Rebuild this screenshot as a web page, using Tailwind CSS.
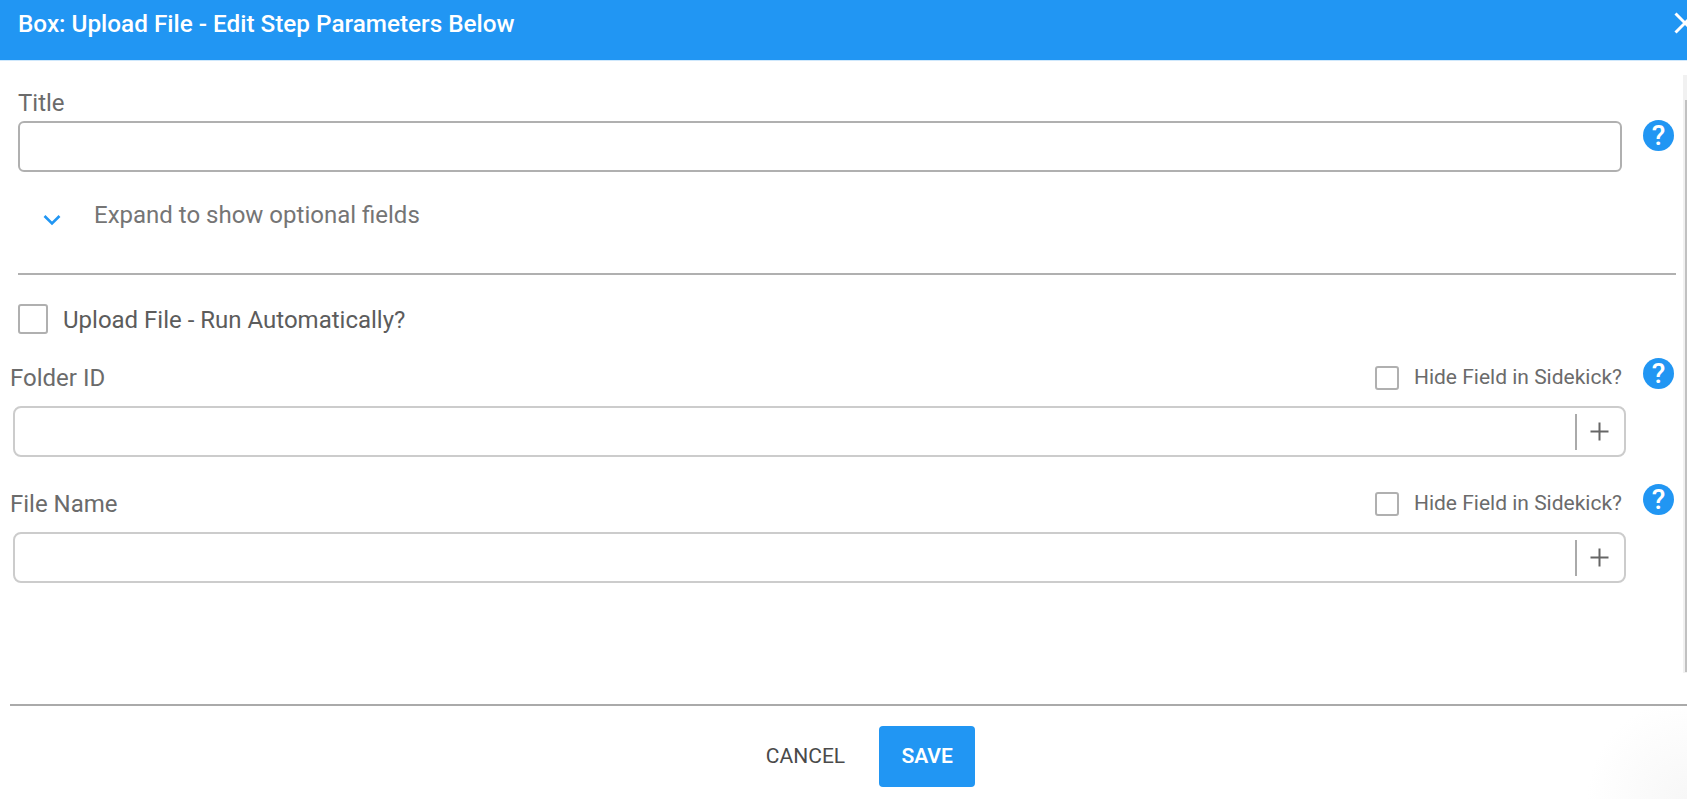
<!doctype html>
<html>
<head>
<meta charset="utf-8">
<script src="https://cdn.jsdelivr.net/npm/@tailwindcss/browser@4"></script>
</head>
<body class="bg-white overflow-hidden">
<div class="relative flex flex-col w-[1687px] h-[799px] overflow-hidden font-['Roboto',sans-serif] bg-white">
  <header class="h-[61px] shrink-0 bg-[#2196f3] border-b border-[#cfe8fc] flex justify-between pl-[18px] relative">
    <h1 class="text-[24.3px] leading-[48px] font-medium text-white whitespace-nowrap">Box: Upload File - Edit Step Parameters Below</h1>
    <svg class="absolute left-[1674px] top-[12px] w-[22px] h-[22px]" viewBox="0 0 22 22" fill="none" stroke="#fff" stroke-width="3"><path d="M1.5 1.5 L20.5 20.5 M20.5 1.5 L1.5 20.5"/></svg>
  </header>

  <main class="h-[643px] shrink-0 relative">
    <div class="pl-[18px] pt-[29px] w-[1676px]">
      <label class="block text-[24px] leading-[26px] text-[#6b6b6b]">Title</label>
      <div class="flex mt-[5px]">
        <input class="w-[1604px] h-[51px] border-2 border-[#b0b0b0] rounded-[6px] bg-white" type="text">
        <svg class="w-[31px] h-[31px] ml-[21px] -mt-[1px]" viewBox="0 0 30 30"><circle cx="15" cy="15" r="15" fill="#2196f3"/><text x="15" y="24.5" text-anchor="middle" font-size="27" font-weight="500" fill="#fff" font-family="Roboto">?</text></svg>
      </div>
      <button class="flex items-center mt-[28px] h-[30px] text-[24px] text-[#757575] whitespace-nowrap">
        <svg class="w-[18px] h-[12px] ml-[25px] mt-[10px]" viewBox="0 0 18 12" fill="none" stroke="#2196f3" stroke-width="2.6"><path d="M1.5 2 L9 9.5 L16.5 2"/></svg>
        <span class="ml-[33px]">Expand to show optional fields</span>
      </button>
      <div class="h-[2px] bg-[#b0b0b0] w-[1658px] mt-[43px]"></div>
      <div class="flex items-center mt-[29px] h-[30px]">
        <span class="w-[30px] h-[30px] border-2 border-[#b0b0b0] rounded-[3px] block"></span>
        <span class="ml-[15px] pt-[2px] text-[24px] text-[#5c5c5c] whitespace-nowrap">Upload File - Run Automatically?</span>
      </div>
    </div>

    <section class="pl-[13px] mt-[28px] w-[1676px]">
      <div class="flex items-center h-[32px]">
        <label class="-ml-[3px] text-[24px] text-[#6b6b6b]">Folder ID</label>
        <span class="ml-auto w-[24px] h-[24px] border-2 border-[#b0b0b0] rounded-[3px] block"></span>
        <span class="ml-[15px] text-[21px] text-[#6b6b6b] whitespace-nowrap">Hide Field in Sidekick?</span>
        <svg class="w-[31px] h-[31px] ml-[21px] mr-[2px] -mt-[9px]" viewBox="0 0 30 30"><circle cx="15" cy="15" r="15" fill="#2196f3"/><text x="15" y="24.5" text-anchor="middle" font-size="27" font-weight="500" fill="#fff" font-family="Roboto">?</text></svg>
      </div>
      <div class="mt-[12px] w-[1613px] h-[51px] border-2 border-[#ccc] rounded-[8px] flex items-center justify-end">
        <div class="w-[2px] h-[36px] bg-[#aaa]"></div>
        <svg class="w-[19px] h-[19px] ml-[13px] mr-[15px]" viewBox="0 0 19 19" stroke="#666" stroke-width="2"><path d="M0.5 9.5 H18.5 M9.5 0.5 V18.5"/></svg>
      </div>
    </section>

    <section class="pl-[13px] mt-[31px] w-[1676px]">
      <div class="flex items-center h-[32px]">
        <label class="-ml-[3px] text-[24px] text-[#6b6b6b]">File Name</label>
        <span class="ml-auto w-[24px] h-[24px] border-2 border-[#b0b0b0] rounded-[3px] block"></span>
        <span class="ml-[15px] text-[21px] text-[#6b6b6b] whitespace-nowrap">Hide Field in Sidekick?</span>
        <svg class="w-[31px] h-[31px] ml-[21px] mr-[2px] -mt-[9px]" viewBox="0 0 30 30"><circle cx="15" cy="15" r="15" fill="#2196f3"/><text x="15" y="24.5" text-anchor="middle" font-size="27" font-weight="500" fill="#fff" font-family="Roboto">?</text></svg>
      </div>
      <div class="mt-[12px] w-[1613px] h-[51px] border-2 border-[#ccc] rounded-[8px] flex items-center justify-end">
        <div class="w-[2px] h-[36px] bg-[#aaa]"></div>
        <svg class="w-[19px] h-[19px] ml-[13px] mr-[15px]" viewBox="0 0 19 19" stroke="#666" stroke-width="2"><path d="M0.5 9.5 H18.5 M9.5 0.5 V18.5"/></svg>
      </div>
    </section>

    <div class="absolute left-[1683px] top-[14px] w-[4px] h-[598px] bg-[#f1f1f1] flex justify-end">
      <div class="w-[2px] h-[572px] mt-[25px] bg-[#c1c1c1]"></div>
    </div>
  </main>

  <footer class="ml-[10px] flex-1 border-t-2 border-[#aaa] flex items-start justify-center pt-[20px] pl-[44px] bg-[radial-gradient(circle_at_100%_100%,#f7f7f7,#ffffff_100px)]">
    <button class="text-[21px] leading-[61px] text-[#4a4a4a] mr-[34px]">CANCEL</button>
    <button class="w-[96px] h-[61px] bg-[#2196f3] rounded-[4px] text-white text-[21px] font-semibold">SAVE</button>
  </footer>
</div>
</body>
</html>
